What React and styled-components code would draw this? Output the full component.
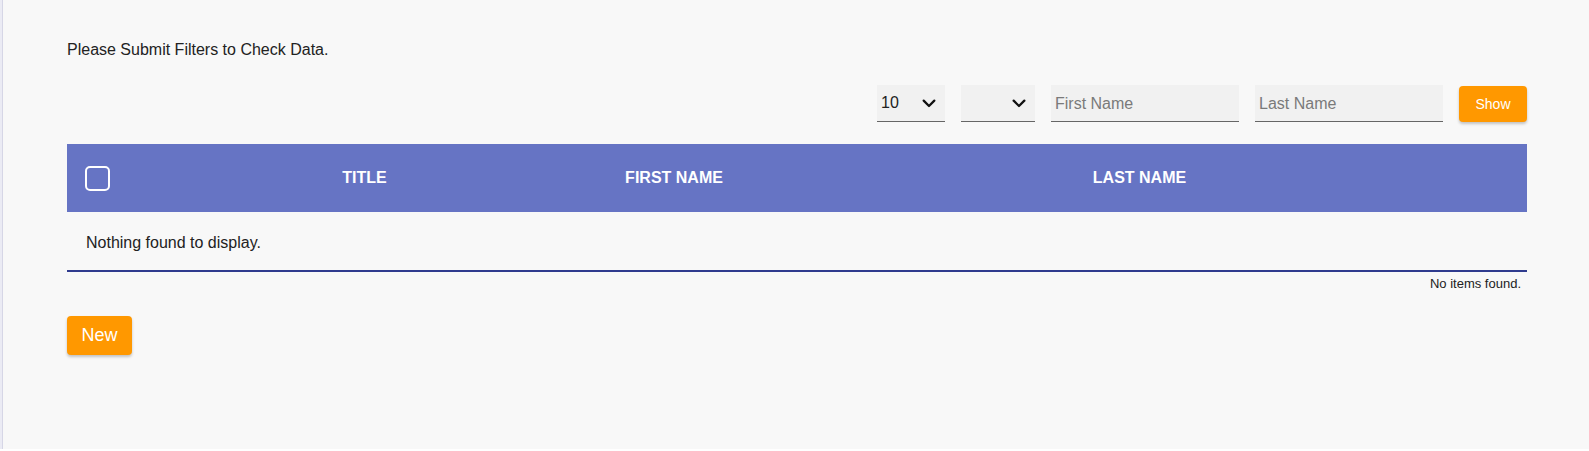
import React from "react";
import styled, { createGlobalStyle } from "styled-components";

const Global = createGlobalStyle`
  html, body { margin: 0; padding: 0; background: #ffffff; }
  body { font-family: "Liberation Sans", Arial, sans-serif; font-size: 16px; color: #222; }
  * { box-sizing: border-box; }
`;

const Shell = styled.div`
  display: flex;
  height: 449px;
  background: #f8f8f8;
`;

const SideEdge = styled.div`
  width: 3px;
  flex: none;
  background: #ebebf4;
  border-right: 1px solid #d6d6e6;
`;

const Main = styled.main`
  flex: 1;
  padding: 41px 62px 0 64px;
  display: flex;
  flex-direction: column;
`;

const Notice = styled.p`
  margin: 0;
  font-size: 16px;
  line-height: 18px;
  color: #222;
`;

const FilterBar = styled.div`
  display: flex;
  justify-content: flex-end;
  align-items: flex-start;
  gap: 16px;
  margin-top: 26px;
`;

const SelectBox = styled.div`
  width: ${(p) => p.$w}px;
  height: 37px;
  background: #f1f1f1;
  border-bottom: 1px solid #666;
  display: flex;
  align-items: center;
  justify-content: space-between;
  padding: 0 8px 0 4px;
  font-size: 16px;
  color: #222;
`;

const TextInput = styled.input`
  width: 188px;
  height: 37px;
  background: #f1f1f1;
  border: none;
  border-bottom: 1px solid #666;
  padding: 1px 4px 0;
  font-family: "Liberation Sans", Arial, sans-serif;
  font-size: 16px;
  color: #222;
  outline: none;
  &::placeholder { color: #7a7a7a; }
`;

const OrangeButton = styled.button`
  background: #ff9800;
  color: #fff;
  border: none;
  border-radius: 4px;
  font-family: "Liberation Sans", Arial, sans-serif;
  font-size: ${(p) => p.$fs}px;
  width: ${(p) => p.$w}px;
  height: ${(p) => p.$h}px;
  padding: 0;
  margin-top: ${(p) => p.$mt || 0}px;
  box-shadow: 0 2px 3px rgba(0, 0, 0, 0.22);
  cursor: pointer;
`;

const Table = styled.div`
  margin-top: 22px;
  display: flex;
  flex-direction: column;
`;

const HeadRow = styled.div`
  display: grid;
  grid-template-columns: 66px 463px 156px 1fr;
  height: 68px;
  background: #6674c4;
  align-items: center;
`;

const HeadCell = styled.div`
  color: #fff;
  font-weight: bold;
  font-size: 16px;
  text-align: center;
`;

const CheckCell = styled.div`
  padding-left: 18px;
  display: flex;
  align-items: center;
  padding-top: 1px;
`;

const CheckBox = styled.span`
  width: 25px;
  height: 25px;
  border: 2px solid #fff;
  border-radius: 5px;
  display: block;
`;

const EmptyRow = styled.div`
  height: 60px;
  display: flex;
  align-items: center;
  padding: 3px 19px 0;
  border-bottom: 2px solid #2f3b8e;
  font-size: 16px;
  color: #222;
`;

const Footer = styled.div`
  text-align: right;
  font-size: 13px;
  line-height: 15px;
  padding: 4px 6px 0 0;
  color: #222;
`;

const Chevron = () => (
  <svg width="16" height="16" viewBox="0 0 24 24" fill="none" stroke="#111" strokeWidth="3.4" strokeLinecap="round" strokeLinejoin="round">
    <path d="M4 8.5l8 8 8-8" />
  </svg>
);

export default function App() {
  return (
    <>
      <Global />
      <Shell>
        <SideEdge />
        <Main>
          <Notice>Please Submit Filters to Check Data.</Notice>
          <FilterBar>
            <SelectBox $w={68}>
              <span>10</span>
              <Chevron />
            </SelectBox>
            <SelectBox $w={74}>
              <span />
              <Chevron />
            </SelectBox>
            <TextInput placeholder="First Name" />
            <TextInput placeholder="Last Name" />
            <OrangeButton $fs={14} $w={68} $h={36} $mt={1}>Show</OrangeButton>
          </FilterBar>
          <Table>
            <HeadRow>
              <CheckCell><CheckBox /></CheckCell>
              <HeadCell>TITLE</HeadCell>
              <HeadCell>FIRST NAME</HeadCell>
              <HeadCell>LAST NAME</HeadCell>
            </HeadRow>
            <EmptyRow>Nothing found to display.</EmptyRow>
            <Footer>No items found.</Footer>
          </Table>
          <div>
            <OrangeButton $fs={18} $w={65} $h={39} $mt={25}>New</OrangeButton>
          </div>
        </Main>
      </Shell>
    </>
  );
}
